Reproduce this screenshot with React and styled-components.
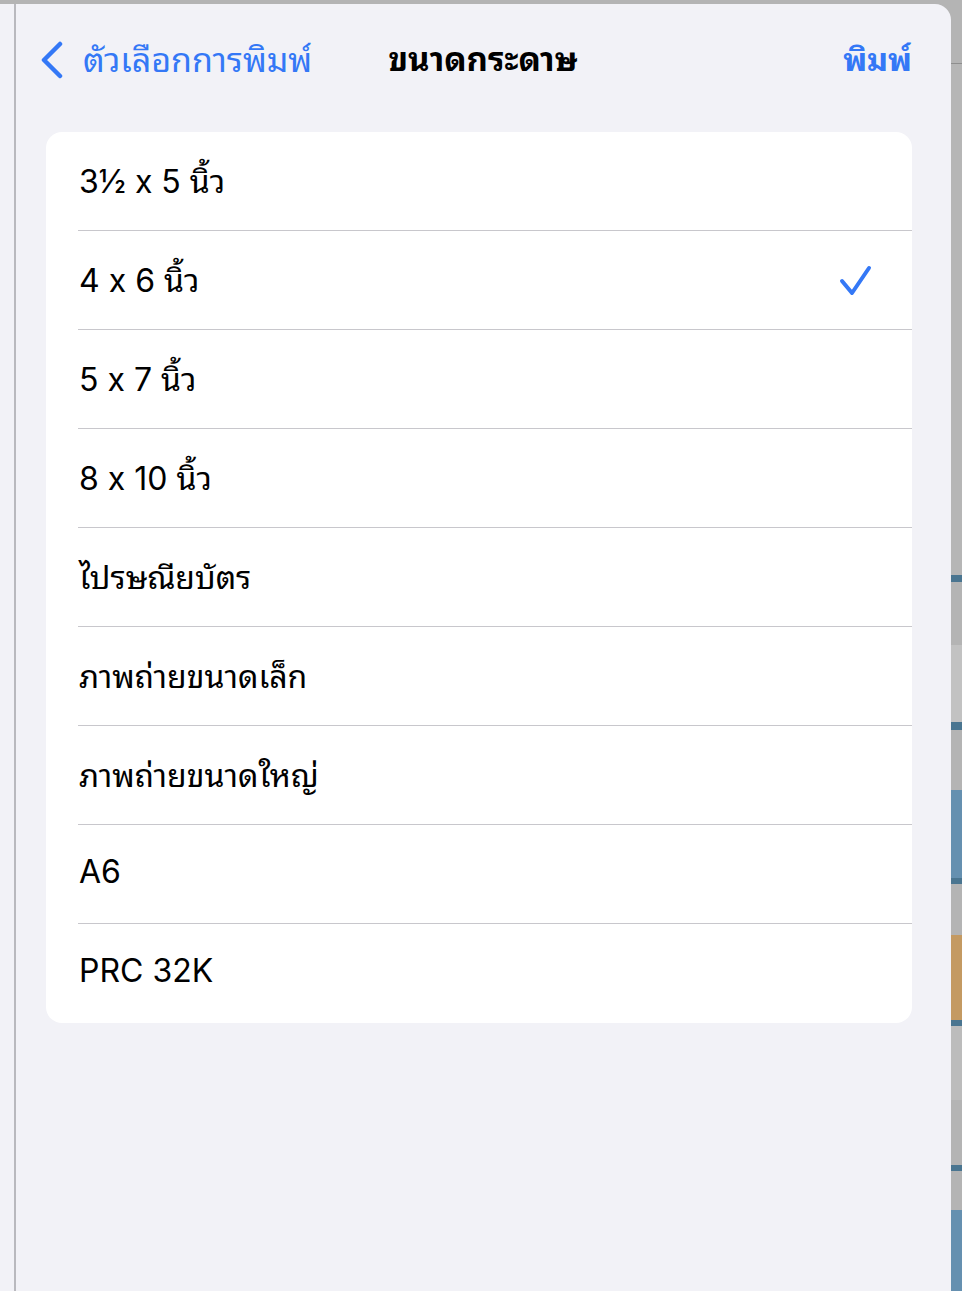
import React from "react";
import styled, { createGlobalStyle } from "styled-components";

const GlobalStyle = createGlobalStyle`
  html, body {
    margin: 0;
    padding: 0;
    background: #f2f2f7;
  }
  body {
    font-family: Inter, "Noto Sans Thai Looped", Waree, Loma, Garuda, Umpush, "Noto Sans Thai", "Noto Sans", sans-serif;
    font-feature-settings: "calt" 0;
    -webkit-font-smoothing: antialiased;
  }
`;

const Page = styled.div`
  width: 962px;
  height: 1291px;
  display: flex;
  overflow: hidden;
  background: #b4b4b4;
`;
const Gutter = styled.div`
  width: 14px;
  margin-top: 4px;
  background: #f2f2f7;
  border-right: 2px solid #b9b9be;
`;
const Sheet = styled.div`
  flex: 1;
  margin-top: 4px;
  background: #f2f2f7;
  border-top-right-radius: 16px;
  display: flex;
  flex-direction: column;
`;
const Backdrop = styled.div`
  width: 11px;
  display: flex;
  flex-direction: column;
`;
const Block = styled.div`
  height: ${(p) => p.$h}px;
  background: ${(p) => p.$c};
  flex-shrink: 0;
`;

const NavBar = styled.div`
  height: 112px;
  box-sizing: border-box;
  display: grid;
  grid-template-columns: 1fr auto 1fr;
  align-items: center;
  padding: 0 39px 8px 24px;
`;
const BackButton = styled.button`
  justify-self: start;
  display: flex;
  align-items: center;
  gap: 19px;
  background: none;
  border: none;
  padding: 0;
  color: #3478f6;
  font-family: inherit;
  font-feature-settings: inherit;
  font-size: 34px;
  svg {
    margin-top: 8px;
  }
`;
const Title = styled.div`
  margin-left: 14px;
  font-size: 33px;
  font-weight: 700;
  color: #000;
`;
const Action = styled.button`
  justify-self: end;
  background: none;
  border: none;
  padding: 0;
  color: #3478f6;
  font-family: inherit;
  font-size: 32px;
  font-weight: 700;
`;

const Card = styled.div`
  margin: 16px 39px 0 30px;
  background: #fff;
  border-radius: 16px;
  overflow: hidden;
`;
const Row = styled.div`
  height: 99px;
  margin-left: 32px;
  padding-right: 38px;
  display: flex;
  align-items: center;
  justify-content: space-between;
  border-bottom: ${(p) => (p.$last ? "none" : "1px solid #c8c7cc")};
  box-sizing: border-box;
`;
const Label = styled.span`
  font-size: 32px;
  color: #000;
  padding: 0 0 6px 1px;
`;

const sizes = [
  "3½ x 5 นิ้ว",
  "4 x 6 นิ้ว",
  "5 x 7 นิ้ว",
  "8 x 10 นิ้ว",
  "ไปรษณียบัตร",
  "ภาพถ่ายขนาดเล็ก",
  "ภาพถ่ายขนาดใหญ่",
  "A6",
  "PRC 32K",
];

const backdrop = [
  [63, "#b4b4b4"],
  [1, "#8e8e8e"],
  [511, "#b6b6b6"],
  [7, "#4a7590"],
  [63, "#b4b4b4"],
  [77, "#c2c2c2"],
  [8, "#4a7590"],
  [60, "#b4b4b4"],
  [88, "#6590b0"],
  [6, "#4a7590"],
  [51, "#b4b4b4"],
  [85, "#c49a62"],
  [6, "#4a7590"],
  [74, "#bcbcbc"],
  [65, "#b4b4b4"],
  [6, "#4a7590"],
  [39, "#b4b4b4"],
  [90, "#6590b0"],
];

const Chevron = () => (
  <svg width="24" height="38" viewBox="0 0 24 38">
    <polyline
      points="20,3 4,19 20,35"
      fill="none"
      stroke="#3478f6"
      strokeWidth="4.5"
      strokeLinecap="round"
      strokeLinejoin="round"
    />
  </svg>
);

const Check = () => (
  <svg width="36" height="36" viewBox="0 0 36 36">
    <polyline
      points="4,19 14,31 31,6"
      fill="none"
      stroke="#3478f6"
      strokeWidth="4"
      strokeLinecap="round"
      strokeLinejoin="round"
    />
  </svg>
);

const App = () => {
  const selected = 1;
  return (
    <Page>
      <GlobalStyle />
      <Gutter />
      <Sheet>
        <NavBar>
          <BackButton>
            <Chevron />
            ตัวเลือกการพิมพ์
          </BackButton>
          <Title>ขนาดกระดาษ</Title>
          <Action>พิมพ์</Action>
        </NavBar>
        <Card>
          {sizes.map((s, i) => (
            <Row key={s} $last={i === sizes.length - 1}>
              <Label>{s}</Label>
              {i === selected && <Check />}
            </Row>
          ))}
        </Card>
      </Sheet>
      <Backdrop>
        {backdrop.map(([h, c], i) => (
          <Block key={i} $h={h} $c={c} />
        ))}
      </Backdrop>
    </Page>
  );
};

export default App;
